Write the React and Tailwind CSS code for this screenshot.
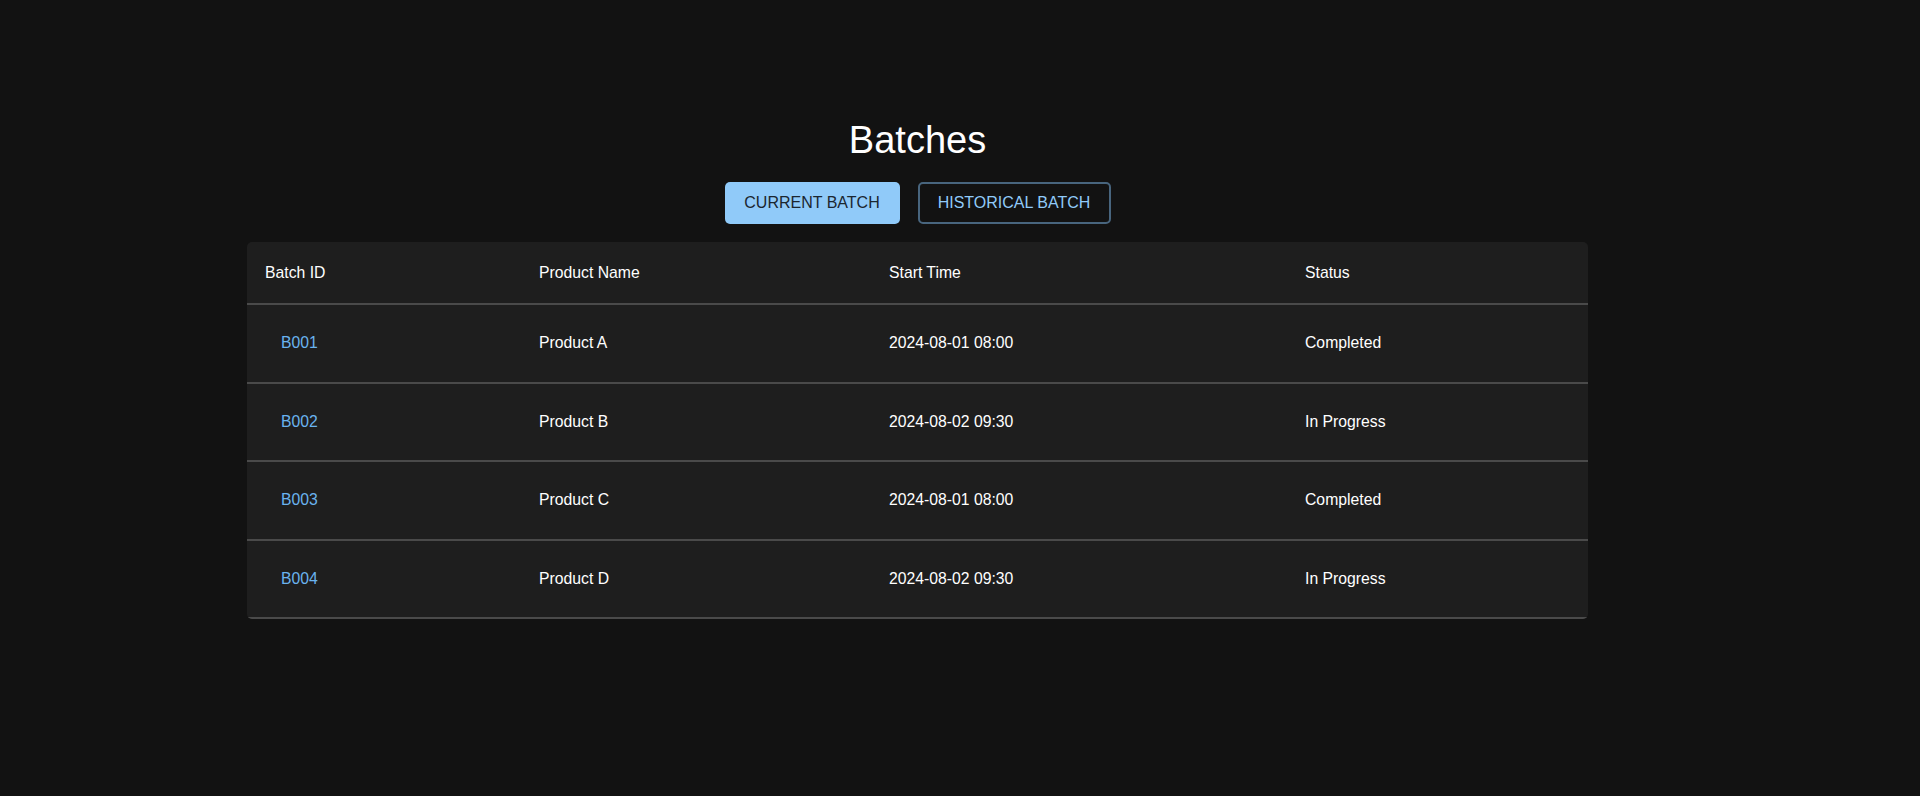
const batches = [
  { id: "B001", product: "Product A", start: "2024-08-01 08:00", status: "Completed" },
  { id: "B002", product: "Product B", start: "2024-08-02 09:30", status: "In Progress" },
  { id: "B003", product: "Product C", start: "2024-08-01 08:00", status: "Completed" },
  { id: "B004", product: "Product D", start: "2024-08-02 09:30", status: "In Progress" },
];

const cols = "grid grid-cols-[274px_350px_416px_301px]";

const App = () => {
  return (
    <div
      className="min-h-screen bg-[#121212] text-white"
      style={{ fontFamily: '"Liberation Sans", Arial, sans-serif' }}
    >
      <div className="w-[1341px] ml-[247px] pt-[118px] flex flex-col items-center">
        <h1 className="text-[38px] leading-[44px] font-normal">Batches</h1>

        <div className="mt-[20px] flex gap-[18px]">
          <button className="h-[42px] w-[175px] rounded-[5px] bg-[#90caf9] text-[#1b2630] text-[16px]">
            CURRENT BATCH
          </button>
          <button className="h-[42px] w-[193px] rounded-[5px] border-2 border-[#48657e] text-[#90caf9] text-[16px]">
            HISTORICAL BATCH
          </button>
        </div>

        {/* table */}
        <div className="mt-[18px] w-full bg-[#1e1e1e] rounded-[5px] overflow-hidden text-[15.75px]">
          <div className={`${cols} h-[63px] items-center border-b-2 border-[#4a4a4a]`}>
            <div className="px-[18px]">Batch ID</div>
            <div className="px-[18px]">Product Name</div>
            <div className="px-[18px]">Start Time</div>
            <div className="px-[18px]">Status</div>
          </div>
          {batches.map((b) => (
            <div
              key={b.id}
              className={`${cols} h-[78.5px] items-center border-b-2 border-[#4a4a4a]`}
            >
              <div className="px-[18px]">
                <span className="px-[16px] text-[#6ab3ef]">{b.id}</span>
              </div>
              <div className="px-[18px]">{b.product}</div>
              <div className="px-[18px]">{b.start}</div>
              <div className="px-[18px]">{b.status}</div>
            </div>
          ))}
        </div>
      </div>
    </div>
  );
};

export default App;
